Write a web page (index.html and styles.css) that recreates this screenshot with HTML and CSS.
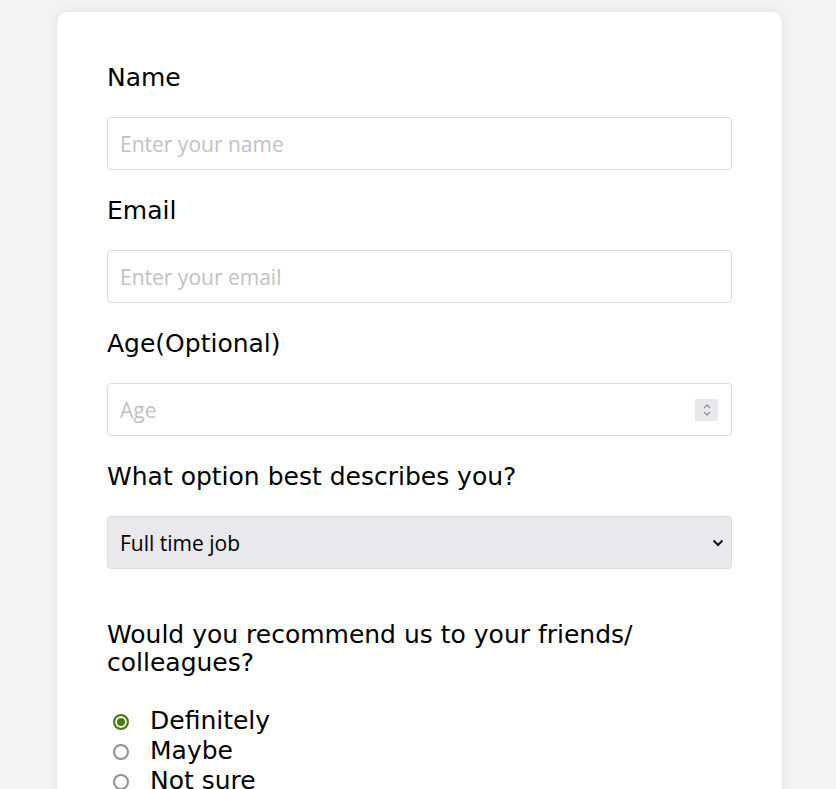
FILE: index.html
```html
<!DOCTYPE html>
<html lang="en">
<head>
<meta charset="utf-8">
<title>Survey</title>
<link rel="stylesheet" href="styles.css">
</head>
<body>
<div class="page">
  <form class="card">
    <div class="field">
      <label class="label" for="name">Name</label>
      <input class="input" id="name" type="text" placeholder="Enter your name">
    </div>
    <div class="field">
      <label class="label" for="email">Email</label>
      <input class="input" id="email" type="email" placeholder="Enter your email">
    </div>
    <div class="field">
      <label class="label" for="age">Age(Optional)</label>
      <div class="number-wrap">
        <input class="input number" id="age" type="number" placeholder="Age">
        <span class="spinner">
          <svg width="10" height="16" viewBox="0 0 10 16"><path d="M2 6 L5 3 L8 6 M2 10 L5 13 L8 10" fill="none" stroke="#8f8f9d" stroke-width="1.3"/></svg>
        </span>
      </div>
    </div>
    <div class="field">
      <label class="label" for="role">What option best describes you?</label>
      <div class="select-wrap">
        <select class="select" id="role">
          <option>Full time job</option>
          <option>Part time job</option>
          <option>Student</option>
        </select>
        <svg class="chevron" width="12" height="8" viewBox="0 0 12 8"><path d="M1.5 1.5 L6 6 L10.5 1.5" fill="none" stroke="#111" stroke-width="2"/></svg>
      </div>
    </div>
    <div class="group">
      <p class="question">Would you recommend us to your friends/ colleagues?</p>
      <div class="radios">
        <label class="radio"><span class="dot checked"></span>Definitely</label>
        <label class="radio"><span class="dot"></span>Maybe</label>
        <label class="radio"><span class="dot"></span>Not sure</label>
      </div>
    </div>
  </form>
</div>
</body>
</html>
```

FILE: styles.css
```css
* { box-sizing: border-box; }
html, body { margin: 0; padding: 0; }
body {
  background: #f3f3f3;
  font-family: "DejaVu Sans", Verdana, sans-serif;
  color: #000;
  overflow: hidden;
  height: 789px;
}
.page {
  padding: 12px 54px 0 57px;
}
.card {
  background: #fff;
  border-radius: 10px;
  box-shadow: 0 0 12px rgba(0, 0, 0, 0.08);
  padding: 52px 50px 40px;
  min-height: 900px;
}
.field {
  display: flex;
  flex-direction: column;
  gap: 25px;
  margin-bottom: 27px;
}
.label {
  font-size: 25px;
  line-height: 28px;
}
.input, .select {
  width: 100%;
  height: 53px;
  border: 1px solid #dcdcdc;
  border-radius: 4px;
  padding: 0 12px;
  font-family: "Open Sans", "Noto Sans", sans-serif;
  font-size: 21px;
  color: #111;
  background: #fff;
  outline: none;
}
.input::placeholder { color: #c2c2c2; }
.number-wrap, .select-wrap { position: relative; }
.number { -moz-appearance: textfield; }
.number::-webkit-inner-spin-button,
.number::-webkit-outer-spin-button { -webkit-appearance: none; margin: 0; }
.spinner {
  position: absolute;
  right: 14px;
  top: 16px;
  width: 23px;
  height: 22px;
  background: #e9e9ed;
  display: flex;
  align-items: center;
  justify-content: center;
}
.select {
  -webkit-appearance: none;
  appearance: none;
  background: #e9e9ed;
  color: #000;
}
.chevron {
  position: absolute;
  right: 8px;
  top: 23px;
  pointer-events: none;
}
.group { margin-top: 52px; }
.question {
  margin: 0;
  font-size: 25px;
  line-height: 28px;
}
.radios {
  margin-top: 29px;
  display: flex;
  flex-direction: column;
}
.radio {
  display: flex;
  align-items: center;
  font-size: 25px;
  line-height: 30px;
}
.dot {
  width: 16px;
  height: 16px;
  border: 2px solid #8f8f9d;
  border-radius: 50%;
  margin: 2px 21px 0 6px;
  flex: none;
}
.dot.checked {
  border-color: #4d7c0f;
  background: #4d7c0f;
  box-shadow: inset 0 0 0 2px #fff;
}
```
